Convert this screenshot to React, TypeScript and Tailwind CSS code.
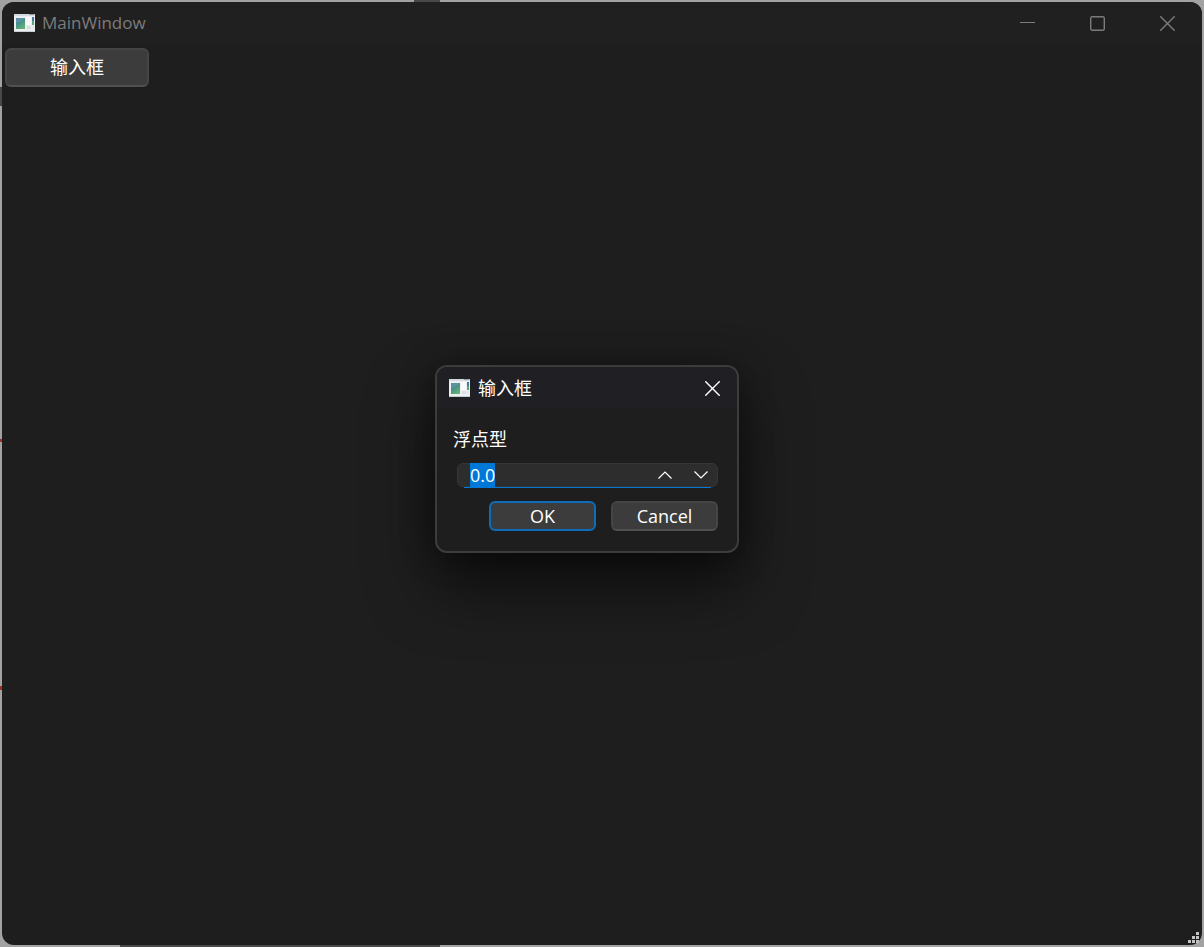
import { useEffect, useRef, useState } from 'react';

const AppIcon = () => (
  <svg width="21" height="18" viewBox="0 0 21 18" aria-hidden="true">
    <defs>
      <linearGradient id="pane" x1="0" y1="0" x2="0.6" y2="1">
        <stop offset="0" stopColor="#4a78a4" />
        <stop offset="0.5" stopColor="#48918a" />
        <stop offset="1" stopColor="#62b274" />
      </linearGradient>
    </defs>
    <rect width="21" height="18" fill="#eceef0" />
    <rect width="21" height="2" fill="#d3dae0" />
    <rect x="15" y="0" width="5" height="1" fill="#8f9fb0" />
    <rect y="17" width="21" height="1" fill="#c8cdd2" />
    <rect x="2" y="4" width="9" height="11" fill="url(#pane)" />
    <path d="M2 9C6 8 9 6 11 4H2z" fill="#7fa9c0" opacity="0.35" />
    <rect x="12" y="3" width="5" height="8" fill="#fafafa" />
    <rect x="13" y="12" width="4" height="3" fill="#dcdfe2" />
    <rect x="18" y="3" width="2" height="4" fill="#4a78a4" />
    <rect x="18" y="7" width="2" height="4" fill="#5aa878" />
    <rect x="18" y="12" width="2" height="3" fill="#e3e5e7" />
  </svg>
);

const CloseIcon = () => (
  <svg width="15" height="15" viewBox="0 0 15 15" fill="none" stroke="currentColor" strokeWidth="1.4" aria-hidden="true">
    <path d="M0.3 0.3L14.7 14.7M14.7 0.3L0.3 14.7" />
  </svg>
);

const InputDialog = () => {
  const [value, setValue] = useState('0.0');
  const inputRef = useRef<HTMLInputElement>(null);

  useEffect(() => {
    inputRef.current?.focus();
    inputRef.current?.select();
  }, []);

  const step = (amount: number) => {
    setValue((Number(value) + amount).toFixed(1));
  };

  return (
    <div
      role="dialog"
      aria-labelledby="dialog-title"
      className="absolute left-[433px] top-[363px] w-[304px] overflow-hidden rounded-xl border-2 border-[#3c3c3c] bg-[#1e1e1e] shadow-[0_32px_64px_rgba(0,0,0,0.6),0_2px_32px_rgba(0,0,0,0.35)]"
    >
      <div className="flex h-[42px] items-center bg-[#202024] pl-3">
        <AppIcon />
        <h2 id="dialog-title" className="ml-2 flex-1 text-white">输入框</h2>
        <button aria-label="Close" className="flex h-full w-[50px] items-center justify-center text-white">
          <CloseIcon />
        </button>
      </div>

      <form className="pt-4 pr-[19px] pb-5 pl-4" onSubmit={(e) => e.preventDefault()}>
        <label htmlFor="float-value" className="block leading-7 text-white">浮点型</label>

        <div className="relative mt-[10px] ml-1 flex h-6 items-center rounded-md border border-[#363636] bg-[#2d2d2d] pr-[7px] pl-3">
          <input
            id="float-value"
            ref={inputRef}
            type="text"
            inputMode="decimal"
            value={value}
            onChange={(e) => setValue(e.target.value)}
            className="h-6 min-w-0 flex-1 bg-transparent leading-6 text-white outline-none selection:bg-[#0078d7] selection:text-white"
          />
          <button type="button" aria-label="Increase" onClick={() => step(1)} className="flex w-[18px] justify-center text-white">
            <svg width="14" height="8" viewBox="0 0 14 8" fill="none" stroke="currentColor" strokeWidth="1.2">
              <path d="M0.5 7.5L7 1L13.5 7.5" />
            </svg>
          </button>
          <button type="button" aria-label="Decrease" onClick={() => step(-1)} className="ml-[18px] flex w-[18px] justify-center text-white">
            <svg width="14" height="8" viewBox="0 0 14 8" fill="none" stroke="currentColor" strokeWidth="1.2">
              <path d="M0.5 0.5L7 7L13.5 0.5" />
            </svg>
          </button>
          <span className="absolute inset-x-[6px] -bottom-[2px] h-px bg-[#0078d7]" />
        </div>

        <div className="mt-[14px] flex justify-end gap-[15px]">
          <button type="submit" className="h-[30px] w-[107px] rounded-md border-2 border-[#0f6cba] bg-[#3c3c3c] leading-[26px] text-white">
            OK
          </button>
          <button type="button" className="h-[30px] w-[107px] rounded-md border-2 border-[#454545] border-b-[#505050] bg-[#3c3c3c] leading-[26px] text-white">
            Cancel
          </button>
        </div>
      </form>
    </div>
  );
};

const App = () => {
  return (
    <div className="flex min-h-screen p-[2px] font-['Open_Sans','Noto_Sans_CJK_SC',sans-serif] text-[18px] [background:linear-gradient(#484848,#484848)_414px_0/26px_2px_no-repeat,linear-gradient(#484848,#484848)_0_87px/2px_19px_no-repeat,linear-gradient(#a03030,#a03030)_0_439px/2px_3px_no-repeat,linear-gradient(#a03030,#a03030)_0_686px/2px_4px_no-repeat,linear-gradient(#484848,#484848)_120px_100%/320px_2px_no-repeat,#a2a2a2]">
      <div className="relative flex flex-1 flex-col rounded-xl bg-[#1e1e1e]">
        <header className="flex h-[42px] items-center rounded-t-xl bg-[#202020] pl-3 text-[#7c7c7c]">
          <AppIcon />
          <h1 className="ml-[7px] flex-1 text-[17px]">MainWindow</h1>
          <button aria-label="Minimize" className="flex h-full w-[70px] items-center justify-center">
            <svg width="15" height="15" viewBox="0 0 15 15" stroke="currentColor">
              <path d="M0 6.5H15" />
            </svg>
          </button>
          <button aria-label="Maximize" className="flex h-full w-[70px] items-center justify-center">
            <svg width="15" height="15" viewBox="0 0 15 15" fill="none" stroke="currentColor" strokeWidth="1.4">
              <rect x="0.7" y="0.7" width="13.6" height="13.6" rx="1.5" />
            </svg>
          </button>
          <button aria-label="Close" className="flex h-full w-[70px] items-center justify-center">
            <CloseIcon />
          </button>
        </header>

        <main className="flex-1 px-[3px] pt-1">
          <button className="h-[39px] w-36 rounded-md border-2 border-[#454545] border-b-[#505050] bg-[#3c3c3c] text-white">
            输入框
          </button>
        </main>

        <footer className="flex justify-end pr-[2px] pb-px">
          <svg width="12" height="12" viewBox="0 0 12 12" fill="#c4c4c4" aria-hidden="true">
            <path d="M8 0h3v3h-3zM4 4h3v3h-3zM8 4h3v3h-3zM0 8h3v3h-3zM4 8h3v3h-3zM8 8h3v3h-3z" />
          </svg>
        </footer>

        <InputDialog />
      </div>
    </div>
  );
};

export default App;
